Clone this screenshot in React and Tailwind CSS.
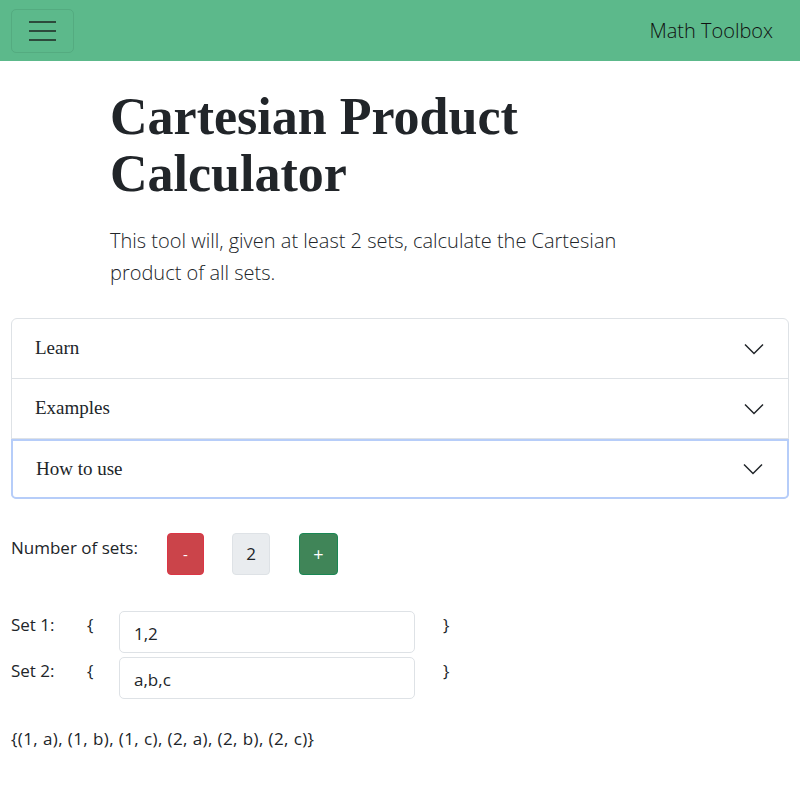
import React, { useState } from 'react';

const serif = { fontFamily: '"Liberation Serif", "DejaVu Serif", serif' };

const Chevron = () => (
    <svg width="20" height="12" viewBox="0 0 20 12" fill="none" stroke="#212529" strokeWidth="1.5">
        <path d="M1 1.5 L10 10.5 L19 1.5" />
    </svg>
);

const AccordionItem = ({ title, focused }) => (
    <div
        className={
            'flex h-[60px] items-center justify-between pl-[23px] pr-[24px] ' +
            (focused
                ? 'rounded-b-[5px] border-2 border-[#b6cdf9] -mx-px -mb-px pl-[22px] pr-[23px]'
                : 'border-b border-[#dee2e6]')
        }
    >
        <span className="text-[19px] text-[#212529]" style={serif}>{title}</span>
        <Chevron />
    </div>
);

const App = () => {
    const [sets, setSets] = useState(['1,2', 'a,b,c']);

    const parse = (s) => s.split(',').map((x) => x.trim()).filter(Boolean);
    const product = sets
        .map(parse)
        .reduce((acc, cur) => acc.flatMap((a) => cur.map((c) => [...a, c])), [[]]);
    const result = '{' + product.map((p) => '(' + p.join(', ') + ')').join(', ') + '}';

    return (
        <div className="min-h-[794px] bg-white text-[#212529]" style={{ fontFamily: '"Open Sans", "Noto Sans", sans-serif' }}>
            <nav className="flex h-[61px] items-center justify-between bg-[#5cb98b] pl-[11px] pr-[27px]">
                <button className="flex h-[44px] w-[63px] flex-col items-center justify-center gap-[7px] rounded-[5px] border border-[#54ab80]">
                    <span className="block h-[2px] w-[27px] bg-[#2c4a3b]" />
                    <span className="block h-[2px] w-[27px] bg-[#2c4a3b]" />
                    <span className="block h-[2px] w-[27px] bg-[#2c4a3b]" />
                </button>
                <span className="text-[20px] font-light text-[#111]">Math Toolbox</span>
            </nav>

            <div className="pl-[110px] pt-[27px]">
                <h1 className="w-[560px] text-[52px] font-bold leading-[57px] text-[#212529]" style={serif}>
                    Cartesian Product Calculator
                </h1>
                <p className="mt-[23px] w-[575px] text-[20px] font-light leading-[32px]">
                    This tool will, given at least 2 sets, calculate the Cartesian product of all sets.
                </p>
            </div>

            <div className="mx-[11px] mt-[29px] rounded-[6px] border border-[#dee2e6]">
                <AccordionItem title="Learn" />
                <AccordionItem title="Examples" />
                <AccordionItem title="How to use" focused />
            </div>

            <div className="mt-[34px] flex items-start pl-[11px]">
                <span className="w-[156px] pt-[2px] text-[17px]">Number of sets:</span>
                <button className="h-[42px] w-[37px] rounded-[4px] border border-[#dc3545] bg-[#cb444a] text-[15px] text-white">-</button>
                <span className="ml-[28px] flex h-[42px] w-[38px] items-center justify-center rounded-[4px] border border-[#dee2e6] bg-[#e9ecef] text-[17px]">2</span>
                <button className="ml-[29px] h-[42px] w-[39px] rounded-[4px] border border-[#198754] bg-[#408558] text-[18px] text-white">+</button>
            </div>

            <div className="mt-[36px] flex flex-col gap-[4px] pl-[11px]">
                {sets.map((v, i) => (
                    <div key={i} className="flex items-start">
                        <span className="w-[76px] pt-[1px] text-[17px]">Set {i + 1}:</span>
                        <span className="w-[32px] pt-[1px] text-[17px]">{'{'}</span>
                        <input
                            value={v}
                            onChange={(e) => setSets(sets.map((s, j) => (j === i ? e.target.value : s)))}
                            className="h-[42px] w-[296px] rounded-[5px] border border-[#dee2e6] px-[14px] pt-[2px] text-[17px] outline-none"
                        />
                        <span className="ml-[28px] pt-[1px] text-[17px]">{'}'}</span>
                    </div>
                ))}
            </div>

            <p className="mt-[27px] pl-[11px] text-[17px] tracking-[0.4px]">{result}</p>
        </div>
    );
};

export default App;
